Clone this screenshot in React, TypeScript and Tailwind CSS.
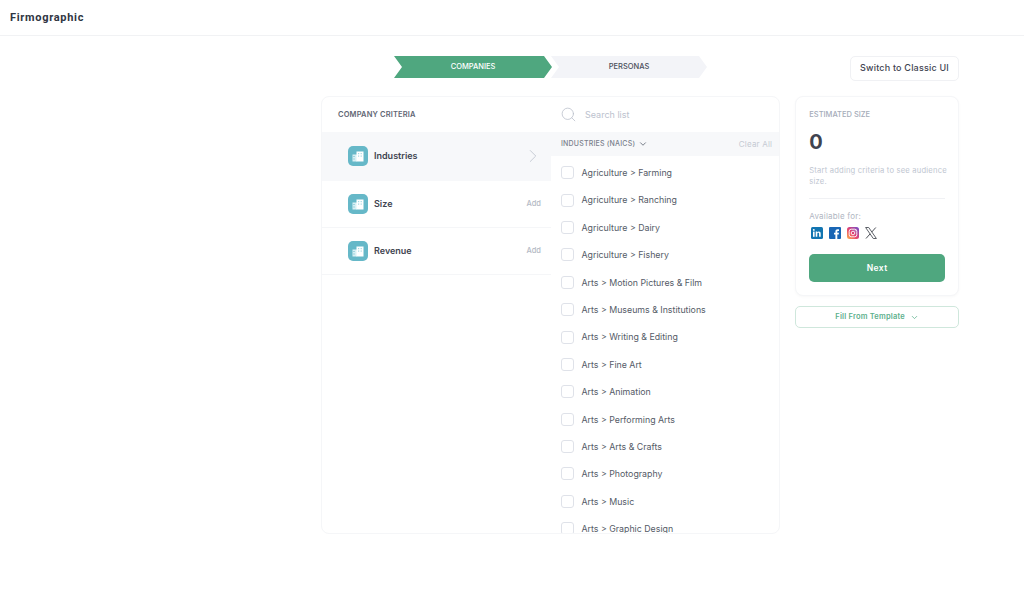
import React from "react";
import { ChevronDown, ChevronRight, Search } from "lucide-react";

const industries = [
  "Agriculture > Farming",
  "Agriculture > Ranching",
  "Agriculture > Dairy",
  "Agriculture > Fishery",
  "Arts > Motion Pictures & Film",
  "Arts > Museums & Institutions",
  "Arts > Writing & Editing",
  "Arts > Fine Art",
  "Arts > Animation",
  "Arts > Performing Arts",
  "Arts > Arts & Crafts",
  "Arts > Photography",
  "Arts > Music",
  "Arts > Graphic Design",
];

const BuildingBadge = () => (
  <div className="flex h-5 w-5 items-center justify-center rounded-[5px] bg-[#66b8c8]">
    <svg width="12" height="11" viewBox="0 0 12 11">
      <rect x="0.5" y="3.5" width="4.5" height="7" fill="#d9f0f4" />
      <rect x="4.5" y="0.5" width="7" height="10" fill="#ffffff" />
      <rect x="1.5" y="5" width="1" height="1" fill="#66b8c8" />
      <rect x="1.5" y="7.5" width="1" height="1" fill="#66b8c8" />
      <rect x="6" y="2" width="1.2" height="1.2" fill="#a5d8e2" />
      <rect x="8.6" y="2" width="1.2" height="1.2" fill="#a5d8e2" />
      <rect x="6" y="4.5" width="1.2" height="1.2" fill="#a5d8e2" />
      <rect x="8.6" y="4.5" width="1.2" height="1.2" fill="#a5d8e2" />
    </svg>
  </div>
);

const LinkedIn = () => (
  <svg width="12" height="12" viewBox="0 0 12 12">
    <rect width="12" height="12" rx="1.5" fill="#1275b1" />
    <rect x="2" y="4.6" width="1.6" height="5.2" fill="#fff" />
    <circle cx="2.8" cy="2.9" r="0.95" fill="#fff" />
    <path d="M4.7 4.6h1.5v.7c.3-.5.9-.85 1.6-.85 1.3 0 1.9.8 1.9 2.2v3.15H8.1V7c0-.7-.25-1.15-.85-1.15-.65 0-.95.5-.95 1.15v2.8H4.7z" fill="#fff" />
  </svg>
);

const Facebook = () => (
  <svg width="12" height="12" viewBox="0 0 12 12">
    <rect width="12" height="12" rx="1" fill="#1a66b5" />
    <path d="M8.3 12V7.5h1.4l.25-1.7H8.3V4.8c0-.5.2-.85.9-.85h.8V2.4c-.3 0-.8-.1-1.3-.1-1.4 0-2.3.85-2.3 2.3v1.2H5v1.7h1.4V12z" fill="#fff" />
  </svg>
);

const Instagram = () => (
  <svg width="12" height="12" viewBox="0 0 12 12">
    <defs>
      <linearGradient id="ig" x1="0" y1="1" x2="1" y2="0">
        <stop offset="0" stopColor="#fdb44b" />
        <stop offset="0.45" stopColor="#e8436f" />
        <stop offset="1" stopColor="#6a4fd0" />
      </linearGradient>
    </defs>
    <rect width="12" height="12" rx="2.5" fill="url(#ig)" />
    <rect x="2.2" y="2.2" width="7.6" height="7.6" rx="2" fill="none" stroke="#fff" strokeWidth="0.9" />
    <circle cx="6" cy="6" r="1.8" fill="none" stroke="#fff" strokeWidth="0.9" />
    <circle cx="8.2" cy="3.8" r="0.5" fill="#fff" />
  </svg>
);

const XLogo = () => (
  <svg width="12" height="12" viewBox="0 0 12 12">
    <path d="M0.6 0.5h3.1l7.7 11h-3.1z" fill="none" stroke="#4b4f57" strokeWidth="0.9" />
    <path d="M10.8 0.5 6.7 5.1M5.2 6.8 1 11.5" fill="none" stroke="#4b4f57" strokeWidth="1" />
  </svg>
);

function CriteriaRow({ label, active }: { label: string; active?: boolean }) {
  return (
    <div
      className={
        active
          ? "flex h-[49px] items-center bg-[#f7f8fa] pb-[1px] pl-[26px] pr-[7px]"
          : "flex h-[47px] items-center border-b border-[#f5f6f8] pl-[26px] pr-[10px]"
      }
    >
      <BuildingBadge />
      <span className="ml-[6px] flex-1 text-[9px] font-semibold text-[#3f4450]">{label}</span>
      {active ? (
        <ChevronRight className="h-[22px] w-[22px] text-[#c3c8d2]" strokeWidth={1} />
      ) : (
        <span className="text-[7.5px] font-medium text-[#b4bac5]">Add</span>
      )}
    </div>
  );
}

export default function App() {
  return (
    <div className="h-[600px] w-[1024px] overflow-hidden bg-white font-['Inter',sans-serif]">
      <header className="flex h-[36px] items-center border-b border-[#f1f2f4] pl-[10px] pt-[1px]">
        <h1 className="font-['Roboto',sans-serif] text-[11px] font-bold tracking-[0.7px] text-[#2f3542]">Firmographic</h1>
      </header>

      <div className="ml-[321px] w-[638px]">
        <div className="flex h-[60px] items-center">
          <div className="ml-[73px] mt-[2px] flex h-[22px]">
            <div className="flex w-[158px] items-center justify-center bg-[#4fa77f] text-[7.5px] font-medium text-white [clip-path:polygon(0_0,150px_0,100%_50%,150px_100%,0_100%,8px_50%)]">
              COMPANIES
            </div>
            <div className="ml-[-1px] flex w-[156px] items-center justify-center bg-[#f3f4f8] text-[7.5px] font-medium text-[#4b505c] [clip-path:polygon(0_0,148px_0,100%_50%,148px_100%,0_100%,8px_50%)]">
              PERSONAS
            </div>
          </div>
          <button className="ml-auto mt-[4px] h-[25px] w-[109px] rounded-[5px] border border-[#f0f1f4] text-[9px] font-medium tracking-[0.2px] text-[#3f4450]">
            Switch to Classic UI
          </button>
        </div>

        <div className="flex items-start gap-[15px]">
          <section className="flex h-[438px] w-[460px] overflow-hidden rounded-[8px] border border-[#f5f6f8] bg-white">
            <div className="w-[229px] shrink-0">
              <div className="flex h-[35px] items-center pl-[16px] text-[7.5px] font-semibold tracking-[0.15px] text-[#5f6673]">
                COMPANY CRITERIA
              </div>
              <CriteriaRow label="Industries" active />
              <CriteriaRow label="Size" />
              <CriteriaRow label="Revenue" />
            </div>

            <div className="min-w-0 flex-1 overflow-hidden">
              <div className="flex h-[35px] items-center pl-[9px]">
                <Search className="h-[17px] w-[17px] text-[#b9bfca]" strokeWidth={1.1} />
                <span className="ml-[8px] text-[9px] text-[#bcc2ce]">Search list</span>
              </div>
              <div className="flex h-[24px] items-center bg-[#f7f8fa] pl-[10px] pr-[7px]">
                <span className="text-[7px] font-medium tracking-[0.2px] text-[#7a808c]">INDUSTRIES (NAICS)</span>
                <ChevronDown className="ml-[3px] h-[10px] w-[10px] text-[#5f6673]" strokeWidth={2} />
                <span className="ml-auto text-[8px] tracking-[0.2px] text-[#c5cad3]">Clear All</span>
              </div>
              <ul className="pt-[3px]">
                {industries.map((name) => (
                  <li key={name} className="flex h-[27.4px] items-center pl-[10px]">
                    <span className="h-[13px] w-[13px] shrink-0 rounded-[3px] border border-[#dfe2e9] bg-white" />
                    <span className="ml-[7.5px] text-[8.8px] text-[#555b67]">{name}</span>
                  </li>
                ))}
              </ul>
            </div>
          </section>

          <aside className="w-[164px]">
            <div className="h-[200px] rounded-[8px] border border-[#f5f6f8] bg-white px-[13px] pt-[12px] shadow-[0_1px_3px_rgba(0,0,0,0.03)]">
              <div className="text-[7.5px] font-medium text-[#a5acb9]">ESTIMATED SIZE</div>
              <div className="mt-[11px] text-[20px] font-bold leading-[22px] text-[#3f4450]">0</div>
              <p className="mr-[-4px] mt-[12px] text-[7.6px] leading-[11px] tracking-[0.2px] text-[#c0c6d1]">
                Start adding criteria to see audience size.
              </p>
              <div className="mt-[11px] border-t border-[#f0f1f4]" />
              <div className="mt-[12px] text-[8px] leading-[10px] tracking-[0.2px] text-[#b0b6c2]">Available for:</div>
              <div className="mt-[6px] flex items-center gap-[6px] pl-[2px]">
                <LinkedIn />
                <Facebook />
                <Instagram />
                <XLogo />
              </div>
              <button className="mt-[15px] h-[28px] w-full rounded-[5px] bg-[#4fa77f] text-[8.5px] font-semibold tracking-[0.4px] text-white">
                Next
              </button>
            </div>
            <button className="mt-[10px] flex h-[22px] w-full items-center justify-center rounded-[5px] border border-[#cfe7dc] text-[7.5px] font-semibold tracking-[0.2px] text-[#5cb08c]">
              Fill From Template
              <ChevronDown className="ml-[5px] h-[9px] w-[9px]" strokeWidth={2} />
            </button>
          </aside>
        </div>
      </div>
    </div>
  );
}
